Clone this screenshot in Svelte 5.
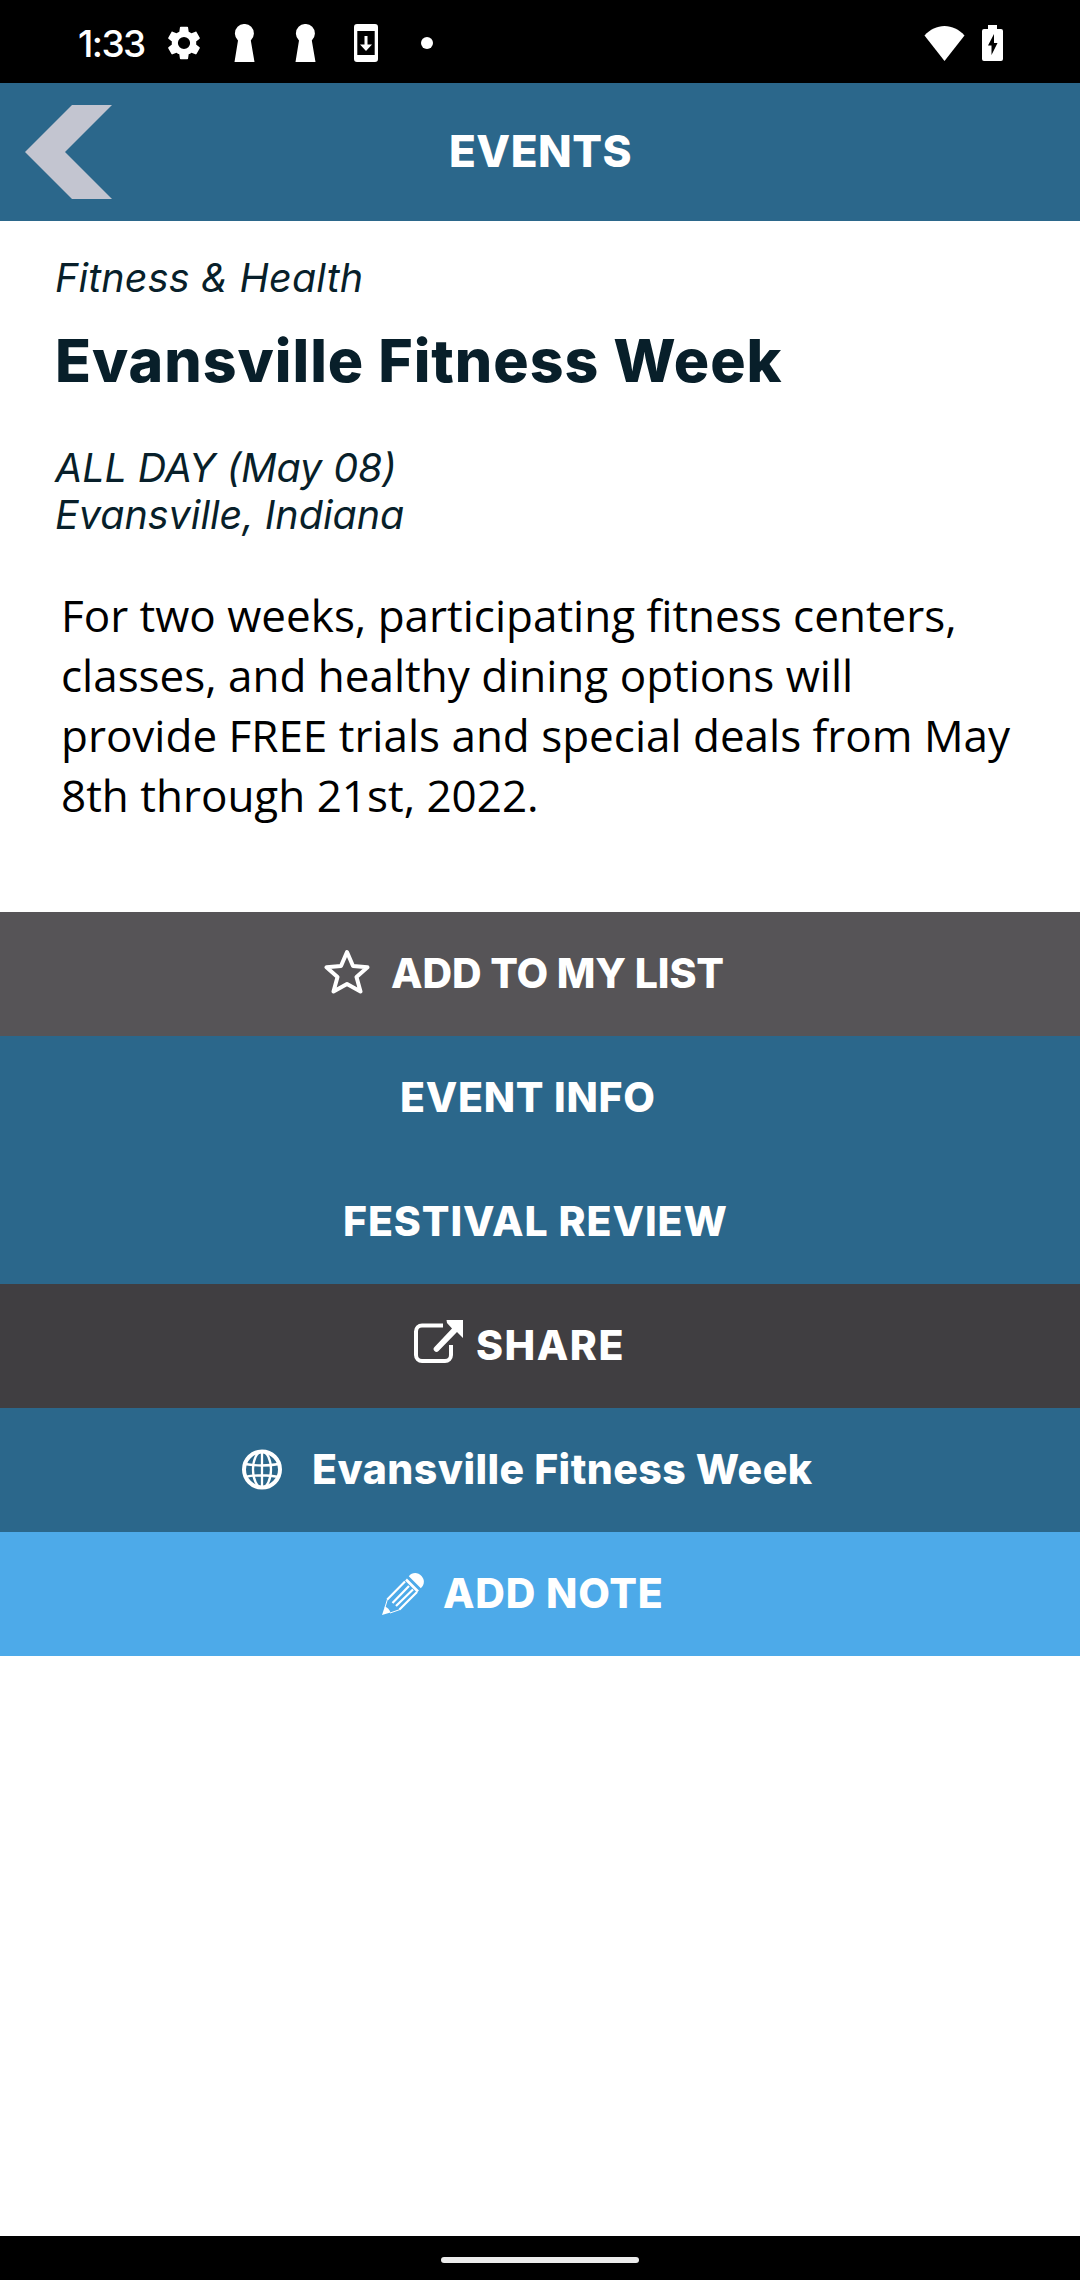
<script>
	const event = {
		category: 'Fitness & Health',
		title: 'Evansville Fitness Week',
		when: 'ALL DAY (May 08)',
		where: 'Evansville, Indiana',
		description:
			'For two weeks, participating fitness centers, classes, and healthy dining options will provide FREE trials and special deals from May 8th through 21st, 2022.'
	};

	const actions = [
		{ id: 'list', icon: 'star', label: 'ADD TO MY LIST' },
		{ id: 'info', label: 'EVENT INFO' },
		{ id: 'review', label: 'FESTIVAL REVIEW' },
		{ id: 'share', icon: 'share', label: 'SHARE' },
		{ id: 'website', icon: 'globe', label: 'Evansville Fitness Week' },
		{ id: 'note', icon: 'pencil', label: 'ADD NOTE' }
	];
</script>

<div class="screen">
	<div class="status">
		<span class="time">1:33</span>
		<svg class="gear" viewBox="2 2 20 20">
			<path
				d="M19.14 12.94c.04-.3.06-.61.06-.94s-.02-.64-.07-.94l2.03-1.58c.18-.14.23-.41.12-.61l-1.92-3.32c-.12-.22-.37-.29-.59-.22l-2.39.96c-.5-.38-1.03-.7-1.62-.94l-.36-2.54c-.04-.24-.24-.41-.48-.41h-3.84c-.24 0-.43.17-.47.41l-.36 2.54c-.59.24-1.13.57-1.62.94l-2.39-.96c-.22-.08-.47 0-.59.22L2.74 8.87c-.12.21-.08.47.12.61l2.03 1.58c-.05.3-.09.63-.09.94s.02.64.07.94l-2.03 1.58c-.18.14-.23.41-.12.61l1.92 3.32c.12.22.37.29.59.22l2.39-.96c.5.38 1.03.7 1.62.94l.36 2.54c.05.24.24.41.48.41h3.84c.24 0 .44-.17.47-.41l.36-2.54c.59-.24 1.13-.56 1.62-.94l2.39.96c.22.08.47 0 .59-.22l1.92-3.32c.12-.22.07-.47-.12-.61zM12 15.6a3.6 3.6 0 1 1 0-7.2 3.6 3.6 0 0 1 0 7.2z"
			/>
		</svg>
		<svg class="keyhole first" viewBox="0 0 21 38">
			<path d="M4 16.5a9.5 9.5 0 1 1 12.8 0L20.5 38H.5z" />
		</svg>
		<svg class="keyhole" viewBox="0 0 21 38">
			<path d="M4 16.5a9.5 9.5 0 1 1 12.8 0L20.5 38H.5z" />
		</svg>
		<svg class="update" viewBox="0 0 24 38">
			<path
				d="M3 0h18a3 3 0 0 1 3 3v32a3 3 0 0 1-3 3H3a3 3 0 0 1-3-3V3a3 3 0 0 1 3-3zm.3 7v24h17.4V7zM10.5 12h3v8.5H18L12 27l-6-6.500h4.500z"
			/>
		</svg>
		<span class="dot"></span>
		<svg class="wifi" viewBox="0 0 41 35">
			<path d="M20.5 35 .5 9.500C6 3.500 13 0 20.500 0s14.500 3.500 20 9.500z" />
		</svg>
		<svg class="battery" viewBox="0 0 21 36">
			<path
				d="M6 0h9v4h4a2 2 0 0 1 2 2v28a2 2 0 0 1-2 2H2a2 2 0 0 1-2-2V6a2 2 0 0 1 2-2h4zM12 9 6 20.500h3.500V30L15.500 18H12z"
			/>
		</svg>
	</div>

	<header>
		<button class="back" aria-label="Back">
			<svg viewBox="0 0 87 94"><path d="M47 0h40L40 47l47 47H47L0 47z" /></svg>
		</button>
		<h1>EVENTS</h1>
	</header>

	<main>
		<p class="category">{event.category}</p>
		<h2>{event.title}</h2>
		<p class="when">{event.when}</p>
		<p class="where">{event.where}</p>
		<p class="description">{event.description}</p>
	</main>

	<nav>
		{#each actions as action}
			<button class="action {action.id}">
				{#if action.icon == 'star'}
					<svg class="icon" viewBox="0 0 46 45">
						<path class="line" d="m23 3 6 14 14.500 1.300-11 9.700 4 14.500L23 35 9.500 42.500l4-14.500-11-9.700L17 17z" />
					</svg>
				{:else if action.icon == 'share'}
					<svg class="icon" viewBox="0 0 49 43">
						<path class="line" d="M29 5.500H8a6 6 0 0 0-6 6V35a6 6 0 0 0 6 6h23a6 6 0 0 0 6-6V25" />
						<path d="M32.500 0H49v18l-6-6-18.500 19a2.600 2.600 0 0 1-4-4L38 8.500l-5-5.500z" />
					</svg>
				{:else if action.icon == 'globe'}
					<svg class="icon" viewBox="0 0 40 41">
						<circle class="line" cx="20" cy="20.500" r="18" />
						<ellipse class="thin" cx="20" cy="20.500" rx="9" ry="18" />
						<path class="thin" d="M20 2v37M3 15q17 3 34 0M3 28q17-3.500 34 0" />
					</svg>
				{:else if action.icon == 'pencil'}
					<svg class="icon" viewBox="0 0 42 42">
						<path d="M0 42 2.800 33.500Q7 35 8.500 39.500z" />
						<path class="hair" d="M3 34.500 5.500 26M8 40l10-3.500" />
						<path class="wood" d="M5.300 26.500 23 8.500M10.500 30 27 13M14 33 31 16.500M17.500 36.500 35 19" />
						<path class="band" d="m24 6.500 12 12" />
						<path d="M26.800 3.300C30-1 36-1 39.500 3s3 9-.700 12.300z" />
					</svg>
				{/if}
				<span>{action.label}</span>
			</button>
		{/each}
	</nav>

	<footer><span class="handle"></span></footer>
</div>

<style>
	:global(body) {
		margin: 0;
	}
	.screen {
		width: 1080px;
		height: 2280px;
		display: flex;
		flex-direction: column;
		overflow: hidden;
		background: #fff;
		font-family: Inter, sans-serif;
	}
	p,
	h1,
	h2 {
		margin: 0;
	}
	svg {
		display: block;
		flex-shrink: 0;
	}

	.status {
		box-sizing: border-box;
		height: 83px;
		padding: 3px 77px 0 78px;
		display: flex;
		align-items: center;
		background: #000;
		color: #fff;
		fill: #fff;
		fill-rule: evenodd;
	}
	.time {
		width: 89px;
		font-size: 37px;
		font-weight: 500;
		letter-spacing: -1.6px;
	}
	.gear {
		width: 34px;
	}
	.keyhole {
		width: 21px;
		margin-left: 40px;
	}
	.keyhole.first {
		margin-left: 33px;
	}
	.update {
		width: 24px;
		margin-left: 38px;
	}
	.dot {
		width: 12px;
		height: 12px;
		margin-left: 43px;
		border-radius: 50%;
		background: #fff;
	}
	.wifi {
		width: 41px;
		margin-left: auto;
	}
	.battery {
		width: 21px;
		margin-left: 17px;
	}

	header {
		height: 138px;
		display: grid;
		grid-template-columns: 1fr auto 1fr;
		align-items: center;
		background: #2b678b;
		color: #fff;
	}
	.back {
		width: 87px;
		margin-left: 25px;
		padding: 0;
		border: 0;
		background: none;
		cursor: pointer;
	}
	.back svg {
		width: 87px;
		fill: #c3c5d0;
	}
	h1 {
		padding: 0 0 2px 1px;
		font-size: 44px;
		font-weight: 800;
		letter-spacing: 0.48px;
	}

	main {
		box-sizing: border-box;
		height: 691px;
		padding: 34px 55px 0;
		color: #081f2a;
	}
	.category,
	.when,
	.where {
		font-size: 39.5px;
		font-style: italic;
		line-height: 47px;
	}
	.category {
		line-height: 46px;
		letter-spacing: 0.15px;
	}
	h2 {
		margin: 25px 0 49px;
		font-size: 59px;
		font-weight: 800;
		line-height: 70px;
		letter-spacing: 0.98px;
	}
	.when {
		letter-spacing: -0.1px;
	}
	.description {
		width: 952px;
		margin: 46px 0 0 6px;
		color: #000;
		font-family: 'Open Sans', sans-serif;
		font-size: 44px;
		line-height: 60px;
	}

	.action {
		box-sizing: border-box;
		width: 100%;
		height: 124px;
		padding: 0 0 2px;
		border: 0;
		display: flex;
		align-items: center;
		background: #2b678b;
		color: #fff;
		font-family: inherit;
		font-size: 41px;
		font-weight: 800;
		cursor: pointer;
	}
	.action.list {
		padding-left: 324px;
		gap: 21px;
		background: #565457;
		letter-spacing: -0.15px;
	}
	.action.info {
		padding-left: 400px;
		letter-spacing: 0.72px;
	}
	.action.review {
		padding-left: 343px;
		letter-spacing: 0.9px;
	}
	.action.share {
		padding-left: 414px;
		gap: 13px;
		background: #403e41;
		letter-spacing: 1.5px;
	}
	.action.website {
		padding-left: 242px;
		gap: 30px;
		letter-spacing: 0.46px;
	}
	.action.note {
		padding-left: 382px;
		gap: 19px;
		background: #4daae9;
		letter-spacing: 0.8px;
	}
	.icon {
		fill: #fff;
		stroke-linejoin: round;
	}
	.list .icon {
		width: 46px;
		margin-bottom: 4px;
	}
	.share .icon {
		width: 49px;
		margin-bottom: 7px;
	}
	.website .icon {
		width: 40px;
	}
	.note .icon {
		width: 42px;
		margin-top: 2px;
	}
	.line,
	.thin,
	.hair,
	.wood,
	.band {
		fill: none;
		stroke: #fff;
		stroke-width: 4;
	}
	.thin {
		stroke-width: 2.3;
	}
	.hair {
		stroke-width: 1;
	}
	.wood {
		stroke-width: 2.2;
	}
	.band {
		stroke-width: 2.6;
	}

	footer {
		height: 44px;
		margin-top: auto;
		display: flex;
		justify-content: center;
		align-items: center;
		background: #000;
	}
	.handle {
		width: 198px;
		height: 6px;
		margin-top: 4px;
		border-radius: 3px;
		background: #ebebeb;
	}
</style>
